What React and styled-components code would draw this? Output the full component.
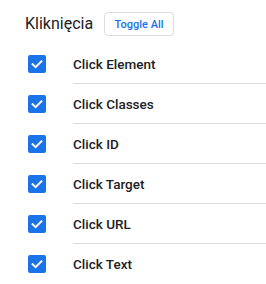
import React from "react";
import styled, { createGlobalStyle } from "styled-components";

const Global = createGlobalStyle`
  html, body { margin: 0; padding: 0; background: #fff; }
  body { font-family: Roboto, "Noto Sans", Arial, sans-serif; }
`;

const Panel = styled.div`
  width: 266px;
  height: 284px;
  overflow: hidden;
`;

const Header = styled.div`
  display: flex;
  align-items: center;
  gap: 11px;
  padding: 12px 0 0 25px;
  height: 24px;
`;

const Title = styled.h2`
  margin: 0;
  font-size: 16px;
  font-weight: 400;
  color: #202124;
  line-height: 24px;
`;

const ToggleButton = styled.button`
  box-sizing: border-box;
  height: 24px;
  width: 70px;
  padding: 0;
  border: 1px solid #dadce0;
  border-radius: 4px;
  background: #fff;
  color: #1a73e8;
  font-family: Roboto, Arial, sans-serif;
  font-size: 11px;
  font-weight: 500;
  cursor: pointer;
`;

const List = styled.div`
  margin-top: 8px;
  display: flex;
  flex-direction: column;
`;

const Row = styled.label`
  display: flex;
  align-items: stretch;
  height: 40px;
`;

const CheckCell = styled.div`
  width: 45px;
  padding-left: 28px;
  display: flex;
  align-items: center;
  flex: none;
`;

const Box = styled.span`
  width: 18px;
  height: 18px;
  border-radius: 2px;
  background: ${(p) => (p.$checked ? "#1a73e8" : "#fff")};
  display: flex;
  align-items: center;
  justify-content: center;
`;

const Label = styled.div`
  flex: 1;
  display: flex;
  align-items: center;
  box-sizing: border-box;
  border-bottom: ${(p) => (p.$last ? "none" : "1px solid #dadce0")};
  font-size: 13.5px;
  font-weight: 500;
  color: #202124;
`;

const items = [
  "Click Element",
  "Click Classes",
  "Click ID",
  "Click Target",
  "Click URL",
  "Click Text",
];

const Check = () => (
  <svg width="18" height="18" viewBox="0 0 18 18">
    <path
      d="M4.6 9.2 L7.6 12.1 L13.4 6.3"
      fill="none"
      stroke="#fff"
      strokeWidth="2"
      strokeLinecap="square"
    />
  </svg>
);

export default function App() {
  return (
    <Panel>
      <Global />
      <Header>
        <Title>Kliknięcia</Title>
        <ToggleButton>Toggle All</ToggleButton>
      </Header>
      <List>
        {items.map((t, i) => (
          <Row key={t}>
            <CheckCell>
              <Box $checked>
                <Check />
              </Box>
            </CheckCell>
            <Label $last={i === items.length - 1}>{t}</Label>
          </Row>
        ))}
      </List>
    </Panel>
  );
}
